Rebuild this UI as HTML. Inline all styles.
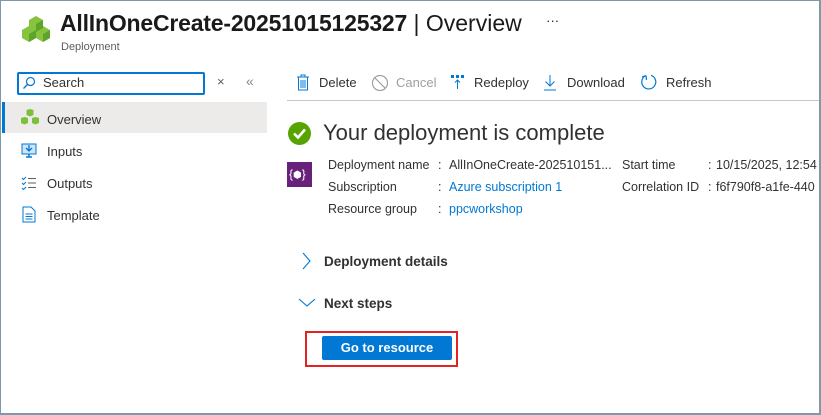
<!DOCTYPE html>
<html><head><meta charset="utf-8"><style>
*{margin:0;padding:0;box-sizing:border-box}
body{width:821px;height:415px;background:#fff;font-family:"Liberation Sans",sans-serif;color:#323130;position:relative;overflow:hidden}
.frame{position:absolute;left:0;top:0;width:821px;height:415px;border:1px solid #7d9aad;border-right:2px solid #7d9aad;border-bottom:2px solid #7d9aad}
.a{position:absolute;white-space:nowrap}
.nav{font-size:13px}
.tb{font-size:13px;top:75px}
.row{font-size:12.5px}
a{color:#0078d4;text-decoration:none}
</style></head><body>
<svg class="a" style="left:20px;top:12px" width="32" height="32" viewBox="0 0 32 32">
<g fill="#86c440"><path d="M9 8l7-4 7 4v8l-7 4-7-4z"/><path d="M2 18l7-4 7 4v8l-7 4-7-4z"/><path d="M16 18l7-4 7 4v8l-7 4-7-4z"/></g>
<g fill="#5ea42a"><path d="M16 12v8l7-4V8z"/><path d="M9 22v8l7-4v-8z"/><path d="M23 22v8l7-4v-8z"/></g>
</svg>
<div class="a" style="left:60px;top:10px;font-size:23px;color:#1b1a19"><b style="font-weight:700;letter-spacing:-0.2px">AllInOneCreate-20251015125327</b> | Overview <span style="font-size:13px;margin-left:18px;vertical-align:6px">···</span></div>
<div class="a" style="left:61px;top:41px;font-size:11px;color:#605e5c">Deployment</div>

<div class="a" style="left:17px;top:72px;width:188px;height:23px;border:2px solid #0078d4;border-radius:2px"></div>
<svg class="a" style="left:22px;top:76px" width="14" height="14" viewBox="0 0 14 14"><circle cx="8.5" cy="5.5" r="4" fill="none" stroke="#0078d4" stroke-width="1.2"/><path d="M5.5 8.5L1.5 12.5" stroke="#0078d4" stroke-width="1.3"/></svg>
<div class="a" style="left:43px;top:75px;font-size:13px;color:#323130">Search</div>
<div class="a" style="left:217px;top:74px;font-size:13px;color:#605e5c">×</div>
<div class="a" style="left:246px;top:73px;font-size:14px;color:#8a8886">«</div>

<div class="a" style="left:2px;top:102px;width:265px;height:31px;background:#edebe9"></div>
<div class="a" style="left:2px;top:102px;width:3px;height:31px;background:#0078d4"></div>
<svg class="a" style="left:20px;top:109px" width="20" height="18" viewBox="0 0 20 18"><g fill="#7cbf3b"><path d="M6.5 1l3.5-1 3.5 1v5l-3.5 1.5-3.5-1.5z"/><path d="M1 9l3.5-1 3.5 1v5l-3.5 1.5-3.5-1.5z"/><path d="M12 9l3.5-1 3.5 1v5l-3.5 1.5-3.5-1.5z"/></g></svg>
<div class="a nav" style="left:47px;top:112px">Overview</div>
<svg class="a" style="left:21px;top:143px" width="16" height="16" viewBox="0 0 16 16"><rect x="1" y="1" width="14" height="10" fill="#cfe4f7" stroke="#0078d4"/><path d="M8 2v6M5 5l3 3 3-3" stroke="#0078d4" fill="none" stroke-width="1.3"/><path d="M5 14h6M8 11v3" stroke="#0078d4" stroke-width="1.5"/></svg>
<div class="a nav" style="left:47px;top:144px">Inputs</div>
<svg class="a" style="left:21px;top:176px" width="16" height="14" viewBox="0 0 16 14"><path d="M1 2l1.5 1.5L5 1M1 7l1.5 1.5L5 6M1 12l1.5 1.5L5 11" stroke="#0078d4" fill="none"/><path d="M7 2.5h8M7 7h8M7 11.5h8" stroke="#605e5c"/></svg>
<div class="a nav" style="left:47px;top:176px">Outputs</div>
<svg class="a" style="left:22px;top:206px" width="14" height="17" viewBox="0 0 14 17"><path d="M1 1h8l4 4v11H1z" fill="#fff" stroke="#0078d4"/><path d="M3.5 8h7M3.5 10.5h7M3.5 13h7" stroke="#0078d4"/></svg>
<div class="a nav" style="left:47px;top:208px">Template</div>

<svg class="a" style="left:296px;top:74px" width="14" height="17" viewBox="0 0 14 17"><path d="M1 3h12M5 3V1h4v2M2.5 3v13h9V3M5 6v8M7 6v8M9 6v8" stroke="#0078d4" fill="none"/></svg>
<div class="a tb" style="left:319px">Delete</div>
<svg class="a" style="left:371px;top:74px" width="18" height="18" viewBox="0 0 18 18"><circle cx="9" cy="9" r="7.5" fill="none" stroke="#a19f9d" stroke-width="1.2"/><path d="M4 4l10 10" stroke="#a19f9d" stroke-width="1.2"/></svg>
<div class="a tb" style="left:396px;color:#a19f9d">Cancel</div>
<svg class="a" style="left:450px;top:74px" width="16" height="16" viewBox="0 0 16 16"><rect x="1" y="1" width="3" height="3" fill="#0078d4"/><rect x="6" y="1" width="3" height="3" fill="#0078d4"/><rect x="11" y="1" width="3" height="3" fill="#0078d4"/><path d="M7.5 6v9M5 8.5l2.5-2.5 2.5 2.5" stroke="#0078d4" fill="none"/></svg>
<div class="a tb" style="left:474px">Redeploy</div>
<svg class="a" style="left:543px;top:74px" width="14" height="17" viewBox="0 0 14 17"><path d="M7 1v11M2.5 7.5L7 12l4.5-4.5M1 16h12" stroke="#0078d4" fill="none"/></svg>
<div class="a tb" style="left:567px">Download</div>
<svg class="a" style="left:640px;top:73px" width="18" height="18" viewBox="0 0 18 18"><path d="M6 2.5A7 7 0 1 0 11 2.3M6 2.5L6.5 7M6 2.5L2 4" stroke="#0078d4" fill="none" stroke-width="1.2"/></svg>
<div class="a tb" style="left:666px">Refresh</div>
<div class="a" style="left:287px;top:100px;width:534px;height:1px;background:#c8c6c4"></div>

<svg class="a" style="left:288px;top:122px" width="23" height="23" viewBox="0 0 23 23"><circle cx="11.5" cy="11.5" r="11.5" fill="#57a300"/><path d="M6 11.5l4 4 7-8" stroke="#fff" stroke-width="2.6" fill="none"/></svg>
<div class="a" style="left:323px;top:120px;font-size:22px;color:#323130">Your deployment is complete</div>

<div class="a" style="left:287px;top:162px;width:25px;height:25px;background:#68217a"></div>
<div class="a" style="left:289px;top:167px;font-size:12px;color:#fff">{<span style="font-size:10px">⬢</span>}</div>

<div class="a row" style="left:328px;top:158px">Deployment name</div>
<div class="a row" style="left:438px;top:158px">:</div>
<div class="a row" style="left:449px;top:158px">AllInOneCreate-202510151...</div>
<div class="a row" style="left:622px;top:158px">Start time</div>
<div class="a row" style="left:708px;top:158px">:</div>
<div class="a row" style="left:716px;top:158px">10/15/2025, 12:54</div>
<div class="a row" style="left:328px;top:180px">Subscription</div>
<div class="a row" style="left:438px;top:180px">:</div>
<div class="a row" style="left:449px;top:180px"><a>Azure subscription 1</a></div>
<div class="a row" style="left:622px;top:180px">Correlation ID</div>
<div class="a row" style="left:708px;top:180px">:</div>
<div class="a row" style="left:716px;top:180px">f6f790f8-a1fe-440</div>
<div class="a row" style="left:328px;top:202px">Resource group</div>
<div class="a row" style="left:438px;top:202px">:</div>
<div class="a row" style="left:449px;top:202px"><a>ppcworkshop</a></div>
<div class="a" style="left:819px;top:100px;width:2px;height:315px;background:#fff"></div>

<svg class="a" style="left:300px;top:252px" width="12" height="18" viewBox="0 0 12 18"><path d="M3 1l7 8-7 8" stroke="#0078d4" fill="none" stroke-width="1.1"/></svg>
<div class="a" style="left:324px;top:254px;font-size:13.5px;font-weight:bold;color:#323130">Deployment details</div>
<svg class="a" style="left:298px;top:297px" width="18" height="12" viewBox="0 0 18 12"><path d="M1 2l8 7 8-7" stroke="#0078d4" fill="none" stroke-width="1.1"/></svg>
<div class="a" style="left:324px;top:296px;font-size:13.5px;font-weight:bold;color:#323130">Next steps</div>

<div class="a" style="left:305px;top:331px;width:153px;height:36px;border:2px solid #e02424"></div>
<div class="a" style="left:322px;top:336px;width:130px;height:24px;background:#0078d4;border-radius:2px;color:#fff;font-size:13px;font-weight:bold;text-align:center;line-height:24px">Go to resource</div>
<div class="frame"></div>
</body></html>
